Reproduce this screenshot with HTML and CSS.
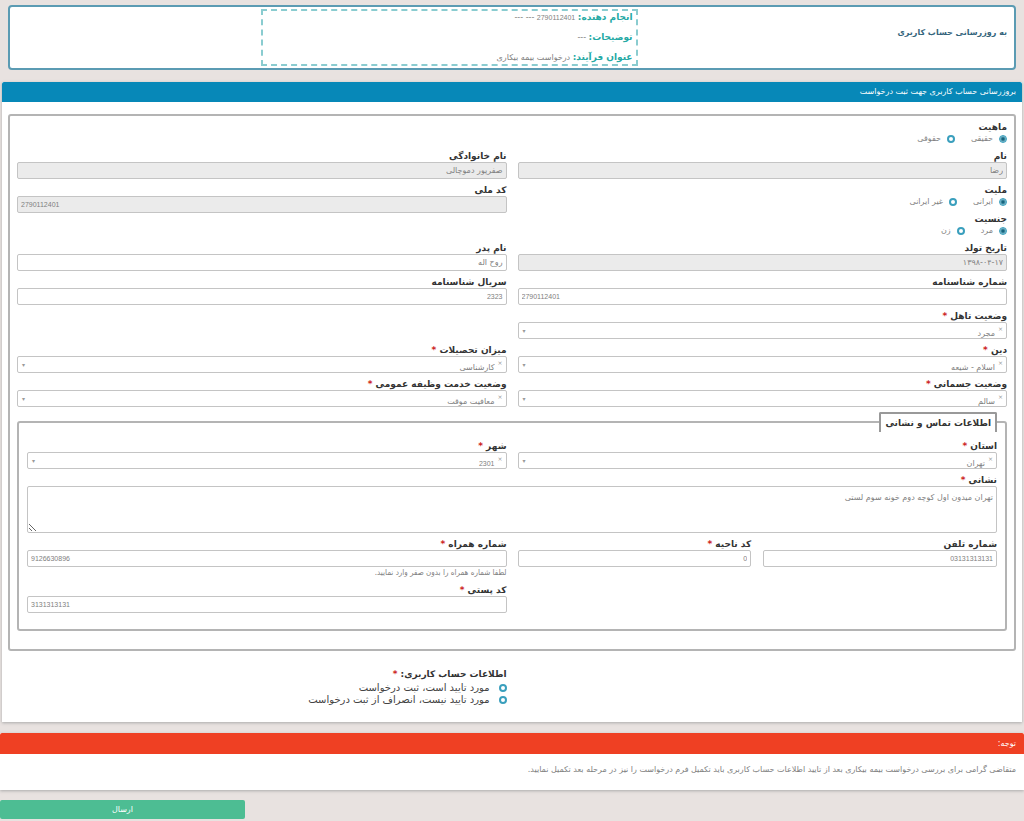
FILE: index.html
```html
<!DOCTYPE html>
<html lang="fa" dir="rtl">
<head>
<meta charset="utf-8">
<title>به روزرسانی حساب کاربری</title>
<link rel="stylesheet" href="styles.css">
</head>
<body>
<header class="summary">
  <h1 class="summary-title">به روزرسانی حساب کاربری</h1>
  <div class="summary-info">
    <p><b>انجام دهنده:</b> <bdi class="num">2790112401</bdi> --- ---</p>
    <p><b>توضیحات:</b> ---</p>
    <p><b>عنوان فرآیند:</b> درخواست بیمه بیکاری</p>
  </div>
</header>
<form class="form">
<main class="card">
  <h2 class="bar">بروزرسانی حساب کاربری جهت ثبت درخواست</h2>
  <div class="card-body">
    <div class="panel grid">
      <div class="field start" role="radiogroup" aria-labelledby="l-kind">
        <span class="label" id="l-kind">ماهیت</span>
        <div class="radios">
          <label><input type="radio" name="kind" checked>حقیقی</label>
          <label><input type="radio" name="kind">حقوقی</label>
        </div>
      </div>
      <div class="field start">
        <label class="label" for="name">نام</label>
        <input class="control" id="name" value="رضا" readonly>
      </div>
      <div class="field">
        <label class="label" for="family">نام خانوادگی</label>
        <input class="control" id="family" value="صفرپور دموچالی" readonly>
      </div>
      <div class="stack start">
        <div class="field" role="radiogroup" aria-labelledby="l-nat">
          <span class="label" id="l-nat">ملیت</span>
          <div class="radios">
            <label><input type="radio" name="nat" checked>ایرانی</label>
            <label><input type="radio" name="nat">غیر ایرانی</label>
          </div>
        </div>
        <div class="field" role="radiogroup" aria-labelledby="l-sex">
          <span class="label" id="l-sex">جنسیت</span>
          <div class="radios">
            <label><input type="radio" name="sex" checked>مرد</label>
            <label><input type="radio" name="sex">زن</label>
          </div>
        </div>
      </div>
      <div class="field">
        <label class="label" for="nid">کد ملی</label>
        <input class="control num" dir="ltr" id="nid" value="2790112401" readonly>
      </div>
      <div class="field start">
        <label class="label" for="birth">تاریخ تولد</label>
        <input class="control" id="birth" value="۱۳۹۸-۰۴-۱۷" readonly>
      </div>
      <div class="field">
        <label class="label" for="father">نام پدر</label>
        <input class="control" id="father" value="روح اله">
      </div>
      <div class="field start">
        <label class="label" for="idno">شماره شناسنامه</label>
        <input class="control num" dir="ltr" id="idno" value="2790112401">
      </div>
      <div class="field">
        <label class="label" for="serial">سریال شناسنامه</label>
        <input class="control num" id="serial" value="2323">
      </div>
      <div class="field start">
        <label class="label" for="marital">وضعیت تاهل <i>*</i></label>
        <div class="pick"><select class="control" id="marital"><option>مجرد</option></select></div>
      </div>
      <div class="field start">
        <label class="label" for="faith">دین <i>*</i></label>
        <div class="pick"><select class="control" id="faith"><option>اسلام - شیعه</option></select></div>
      </div>
      <div class="field">
        <label class="label" for="degree">میزان تحصیلات <i>*</i></label>
        <div class="pick"><select class="control" id="degree"><option>کارشناسی</option></select></div>
      </div>
      <div class="field start">
        <label class="label" for="health">وضعیت جسمانی <i>*</i></label>
        <div class="pick"><select class="control" id="health"><option>سالم</option></select></div>
      </div>
      <div class="field">
        <label class="label" for="service">وضعیت خدمت وظیفه عمومی <i>*</i></label>
        <div class="pick"><select class="control" id="service"><option>معافیت موقت</option></select></div>
      </div>
      <fieldset class="contact wide">
        <legend>اطلاعات تماس و نشانی</legend>
        <div class="grid">
          <div class="field start">
            <label class="label" for="state">استان <i>*</i></label>
            <div class="pick"><select class="control" id="state"><option>تهران</option></select></div>
          </div>
          <div class="field">
            <label class="label" for="city">شهر <i>*</i></label>
            <div class="pick"><select class="control num" id="city"><option>2301</option></select></div>
          </div>
          <div class="field wide">
            <label class="label" for="address">نشانی <i>*</i></label>
            <textarea class="control area" id="address">تهران میدون اول کوچه دوم خونه سوم لستی</textarea>
          </div>
          <div class="pair start">
            <div class="field">
              <label class="label" for="phone">شماره تلفن</label>
              <input class="control num" id="phone" value="03131313131">
            </div>
            <div class="field">
              <label class="label" for="area">کد ناحیه <i>*</i></label>
              <input class="control num" id="area" value="0">
            </div>
          </div>
          <div class="field">
            <label class="label" for="mobile">شماره همراه <i>*</i></label>
            <input class="control num" dir="ltr" id="mobile" value="9126630896" aria-describedby="mobile-hint">
            <small class="hint" id="mobile-hint">لطفا شماره همراه را بدون صفر وارد نمایید.</small>
          </div>
          <div class="field end">
            <label class="label" for="postal">کد پستی <i>*</i></label>
            <input class="control num" dir="ltr" id="postal" value="3131313131">
          </div>
        </div>
      </fieldset>
    </div>
    <div class="grid confirm">
      <div class="end" role="radiogroup" aria-labelledby="l-confirm">
        <span class="label" id="l-confirm">اطلاعات حساب کاربری: <i>*</i></span>
        <label class="choice"><input type="radio" name="confirm">مورد تایید است، ثبت درخواست</label>
        <label class="choice"><input type="radio" name="confirm">مورد تایید نیست، انصراف از ثبت درخواست</label>
      </div>
    </div>
  </div>
</main>
<section class="card notice">
  <h2 class="bar">توجه:</h2>
  <p>متقاضی گرامی برای بررسی درخواست بیمه بیکاری بعد از تایید اطلاعات حساب کاربری باید تکمیل فرم درخواست را نیز در مرحله بعد تکمیل نمایید.</p>
</section>
<button class="send" type="submit">ارسال</button>
</form>
</body>
</html>
```
FILE: styles.css
```css
* { box-sizing: border-box; }

body {
  margin: 0;
  padding: 5px 2px 0;
  background: #e8e2e0;
  color: #808080;
  font: 8px/12px "DejaVu Sans", sans-serif;
}

h1, h2, p { margin: 0; }
i { color: #c22; font-style: normal; }

input, select, textarea, button { margin: 0; font: inherit; color: inherit; }

.summary {
  display: grid;
  grid-template-columns: 3fr 3fr 2fr;
  margin: 0 6px 12px;
  padding: 2px 0;
  background: #fff;
  border: 2px solid #5b9bb3;
  border-radius: 4px;
}

.summary-title {
  padding: 17px 7px 0;
  color: #35657c;
  font-size: 8px;
  font-weight: bold;
  line-height: 14px;
}

.summary-info {
  display: grid;
  gap: 7px;
  padding: 0 3px;
  border: 2px dashed #8accd0;
}

.summary-info b { color: #25a9a4; font-size: 9px; }

.num { font-family: "Liberation Sans", sans-serif; font-size: 7px; }

.card {
  margin-bottom: 11px;
  background: #fff;
  box-shadow: 0 1px 3px #aaa;
}

.bar {
  padding: 0 6px;
  background: #0788b8;
  border-radius: 2px 2px 0 0;
  color: #fff;
  font-size: 8px;
  font-weight: normal;
  line-height: 20px;
}

.card-body { padding: 12px 6px 16px; }

.panel {
  padding: 5px 7px 18px;
  border: 2px solid #b4b4b4;
  border-radius: 3px;
}

.grid {
  display: grid;
  grid-template-columns: 1fr 1fr;
  gap: 5px 11px;
  align-items: start;
}

.start { grid-column-start: 1; }
.end { grid-column-start: 2; }
.wide { grid-column: 1 / -1; }
.stack { display: grid; gap: 5px; }
.pair { display: grid; grid-template-columns: 1fr 1fr; gap: 12px; }
.field { display: grid; min-width: 0; }

.label {
  display: block;
  color: #333;
  font-size: 9px;
  font-weight: bold;
}

.control {
  width: 100%;
  height: 17px;
  padding: 0 3px;
  background: #fff;
  border: 1px solid #c4c4c4;
  border-radius: 2px;
  outline: 0;
}

.control.num { font-family: "Liberation Sans", sans-serif; font-size: 7px; }

.control:read-only:not(select) { background: #ebebeb; }

.area {
  display: block;
  height: 47px;
  padding: 5px 3px;
  resize: vertical;
}

.pick { display: grid; position: relative; }
.pick select { appearance: none; padding: 5px 11px 0; }

.pick::before, .pick::after {
  position: absolute;
  top: 0;
  color: #999;
  line-height: 14px;
}

.pick::before { content: "×"; right: 4px; font-size: 6px; z-index: 1; }
.pick::after { content: "▾"; left: 5px; font-size: 6px; line-height: 17px; }

.radios { display: flex; gap: 16px; }
.radios label, .choice { display: flex; align-items: center; }
.radios label { gap: 6px; }

input[type="radio"] {
  appearance: none;
  width: 8px;
  height: 8px;
  border: 2px solid #3a9fbd;
  border-radius: 50%;
  background: #fff;
}

input[type="radio"]:checked {
  border-width: 1px;
  background: radial-gradient(#16657e 1px, #8cc6d8 3px);
}

.contact {
  min-width: 0;
  margin: 0;
  padding: 8px 8px 16px;
  border: 2px solid #b4b4b4;
  border-radius: 3px;
}

.contact legend {
  padding: 2px 4px;
  border: 2px solid #999;
  border-bottom: 0;
  border-radius: 2px 2px 0 0;
  color: #333;
  font-size: 9px;
  font-weight: bold;
  line-height: 14px;
}

.hint { font-family: "DejaVu Sans Condensed", "DejaVu Sans", sans-serif; font-size: 8px; }

.confirm { padding: 17px 9px 0; }
.confirm .label { margin-bottom: 2px; }
.choice { gap: 9px; color: #444; font-size: 10px; }

.notice { margin: 0 -2px 10px; }
.notice .bar { padding: 0 8px; background: #ef4023; line-height: 21px; }
.notice p { padding: 10px 8px 14px; }

.send {
  display: block;
  width: 24%;
  height: 19px;
  margin: 0 auto 0 -2px;
  border: 0;
  border-radius: 2px;
  background: #4dbd93;
  color: #fff;
}
```
